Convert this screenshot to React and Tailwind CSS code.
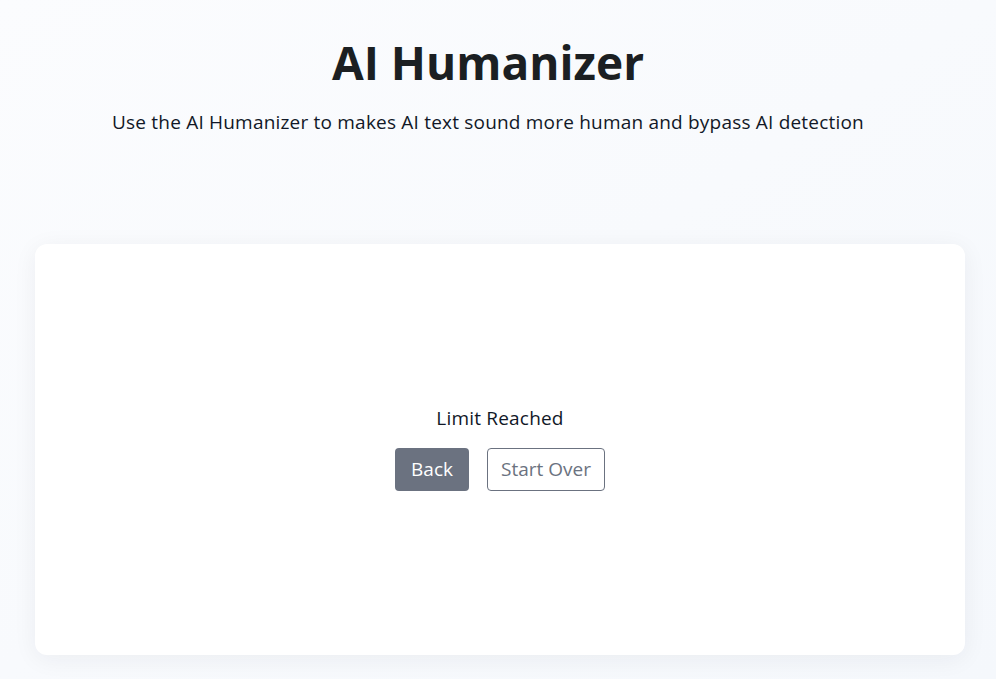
import React from 'react';

const App = () => {
  return (
    <div
      className="min-h-[679px] w-full bg-gradient-to-br from-[#fbfcfe] to-[#f5f8fc] pb-6"
      style={{ fontFamily: '"Open Sans", "Noto Sans", sans-serif' }}
    >
      <div className="flex flex-col items-center pt-[33px] pr-[20px]">
        <h1 className="text-[46px] font-bold leading-[58px] text-[#1b1f22]">AI Humanizer</h1>
        <p className="mt-[17px] text-[19px] leading-[28px] tracking-[0.2px] text-[#111827]">
          Use the AI Humanizer to makes AI text sound more human and bypass AI detection
        </p>
      </div>

      <div className="ml-[35px] mr-[31px] mt-[108px] flex h-[411px] flex-col items-center justify-center rounded-[12px] bg-white pb-[4px] shadow-[0_4px_24px_rgba(30,41,59,0.06)]">
        <p className="text-[19px] leading-[26px] tracking-[0.2px] text-[#111827]">Limit Reached</p>
        <div className="mt-[17px] flex gap-[18px]">
          <button className="h-[43px] rounded-[4px] bg-[#6b7280] px-[16px] text-[19px] text-white">Back</button>
          <button className="h-[43px] rounded-[4px] border border-[#6b7280] bg-white px-[13px] text-[19px] text-[#6b7280]">Start Over</button>
        </div>
      </div>
    </div>
  );
};

export default App;
